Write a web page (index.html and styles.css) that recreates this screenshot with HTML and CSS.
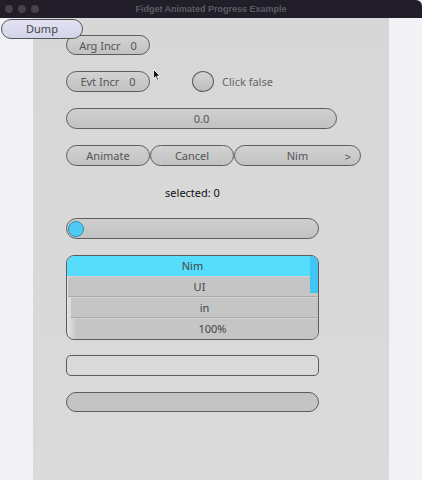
FILE: index.html
```html
<!DOCTYPE html>
<html>
<head>
<meta charset="utf-8">
<link rel="stylesheet" href="styles.css">
</head>
<body>
<div class="window">
  <div class="titlebar">
    <div class="lights"><span></span><span></span><span></span></div>
    <div class="title">Fidget Animated Progress Example</div>
  </div>
  <div class="content">
    <div class="side"></div>
    <main class="panel">
      <div class="btn btn-small"><span>Arg Incr</span><span>0</span></div>
      <div class="row row-evt">
        <div class="btn btn-small"><span>Evt Incr</span><span>0</span></div>
        <div class="check"></div>
        <span class="check-label">Click false</span>
      </div>
      <div class="progress">0.0</div>
      <div class="row row-actions">
        <div class="btn btn-seg">Animate</div>
        <div class="btn btn-seg">Cancel</div>
        <div class="btn btn-drop"><span class="drop-label">Nim</span><span class="drop-arrow">&gt;</span></div>
      </div>
      <div class="selected">selected: 0</div>
      <div class="slider"><span class="knob"></span></div>
      <div class="list">
        <div class="list-head">Nim</div>
        <div class="list-row row-1">UI</div>
        <div class="list-row row-2">in</div>
        <div class="list-row row-3">100%</div>
        <div class="scrollbar"></div>
      </div>
      <div class="text-input"></div>
      <div class="bar"></div>
    </main>
    <div class="side"></div>
  </div>
  <div class="dump">Dump</div>
  <svg class="cursor" width="8" height="12" viewBox="0 0 8 12"><path d="M0.5 0.5 L0.5 9.5 L2.6 7.6 L4.2 11.2 L5.6 10.6 L4.1 7.1 L7 7 Z" fill="#111" stroke="#fff" stroke-width="0.8"/></svg>
</div>
</body>
</html>
```
FILE: styles.css
```css
html, body {
  margin: 0;
  padding: 0;
  background: #f2f2f6;
}
.window {
  position: relative;
  width: 422px;
  height: 480px;
  overflow: hidden;
  font-family: "Noto Sans", "Open Sans", sans-serif;
  color: #555;
}
.titlebar {
  height: 18px;
  background: #211e29;
  display: flex;
  align-items: center;
  position: relative;
  border-top-right-radius: 6px;
}
.lights {
  display: flex;
  gap: 5px;
  padding-left: 5px;
}
.lights span {
  width: 8px;
  height: 8px;
  border-radius: 50%;
  background: #45424c;
}
.title {
  position: absolute;
  left: 0;
  right: 0;
  text-align: center;
  font-family: "Liberation Sans", sans-serif;
  font-weight: bold;
  font-size: 9px;
  color: #5d5b64;
  line-height: 18px;
}
.content {
  display: flex;
  height: 462px;
}
.side {
  width: 33px;
  background: #f2f2f6;
}
.panel {
  width: 356px;
  box-sizing: border-box;
  padding: 17px 0 0 33px;
  background: linear-gradient(#d7d7d8, #dadadb);
  display: flex;
  flex-direction: column;
  align-items: flex-start;
  font-size: 11px;
}
.btn {
  box-sizing: border-box;
  border: 1px solid #5c5c5c;
  border-radius: 11px;
  background: linear-gradient(#d2d2d2, #c2c2c2);
  display: flex;
  align-items: center;
  justify-content: center;
  color: #555;
}
.btn-small {
  width: 84px;
  height: 20px;
  gap: 10px;
}
.row {
  display: flex;
  align-items: center;
}
.row-evt {
  margin-top: 16px;
}
.row-evt .btn-small {
  height: 21px;
}
.check {
  width: 22px;
  height: 21px;
  box-sizing: border-box;
  border-radius: 50%;
  border: 1px solid #5c5c5c;
  background: linear-gradient(#d4d4d4, #bdbdbd);
  margin-left: 42px;
}
.check-label {
  margin-left: 8px;
  font-size: 11px;
  color: #666;
}
.progress {
  margin-top: 16px;
  width: 271px;
  height: 21px;
  box-sizing: border-box;
  border: 1px solid #5c5c5c;
  border-radius: 11px;
  background: linear-gradient(#cfcfcf, #c2c2c2);
  text-align: center;
  line-height: 19px;
}
.row-actions {
  margin-top: 16px;
}
.btn-seg {
  width: 84px;
  height: 21px;
}
.btn-drop {
  width: 127px;
  height: 21px;
  position: relative;
}
.drop-arrow {
  position: absolute;
  right: 9px;
  top: 3px;
}
.selected {
  margin-top: 19px;
  width: 253px;
  text-align: center;
  color: #111;
  font-size: 11px;
  line-height: 15px;
}
.slider {
  margin-top: 18px;
  width: 253px;
  height: 21px;
  box-sizing: border-box;
  border: 1px solid #5c5c5c;
  border-radius: 11px;
  background: linear-gradient(#cdcdcd, #c3c3c3);
  display: flex;
  align-items: center;
  padding-left: 1px;
}
.knob {
  width: 16px;
  height: 16px;
  box-sizing: border-box;
  border-radius: 50%;
  background: #4fcaf4;
  border: 1px solid #2c8fb5;
}
.list {
  margin-top: 16px;
  width: 253px;
  height: 85px;
  box-sizing: border-box;
  border: 1px solid #5c5c5c;
  border-radius: 8px;
  overflow: hidden;
  position: relative;
  background: linear-gradient(90deg, #e4e4e4, #c8c8c8 10px);
}
.list-head {
  height: 20px;
  background: #55ddfb;
  text-align: center;
  line-height: 20px;
  color: #444;
}
.list-row {
  height: 21px;
  box-sizing: border-box;
  background: #c5c5c5;
  border-top: 1px solid #d3d3d3;
  border-bottom: 1px solid #ababab;
  text-align: center;
  line-height: 19px;
  color: #444;
}
.row-1 { margin-left: 1px; padding-left: 13px; }
.row-2 { margin-left: 4px; padding-left: 20px; }
.row-3 { margin-left: 8px; padding-left: 32px; border-bottom: none; }
.scrollbar {
  position: absolute;
  top: 0;
  right: 0;
  width: 8px;
  height: 37px;
  background: #40c6f5;
}
.text-input {
  margin-top: 15px;
  width: 253px;
  height: 21px;
  box-sizing: border-box;
  border: 1px solid #5c5c5c;
  border-radius: 5px;
  background: #dadada;
}
.bar {
  margin-top: 16px;
  width: 253px;
  height: 20px;
  box-sizing: border-box;
  border: 1px solid #5c5c5c;
  border-radius: 10px;
  background: #c4c4c4;
}
.dump {
  position: absolute;
  left: 1px;
  top: 19px;
  width: 82px;
  height: 20px;
  box-sizing: border-box;
  border: 1px solid #555;
  border-radius: 10px;
  background: linear-gradient(#e2e2f2, #d4d4ea);
  text-align: center;
  line-height: 18px;
  font-size: 11px;
  color: #444;
}
.cursor {
  position: absolute;
  left: 153px;
  top: 69px;
}
```
